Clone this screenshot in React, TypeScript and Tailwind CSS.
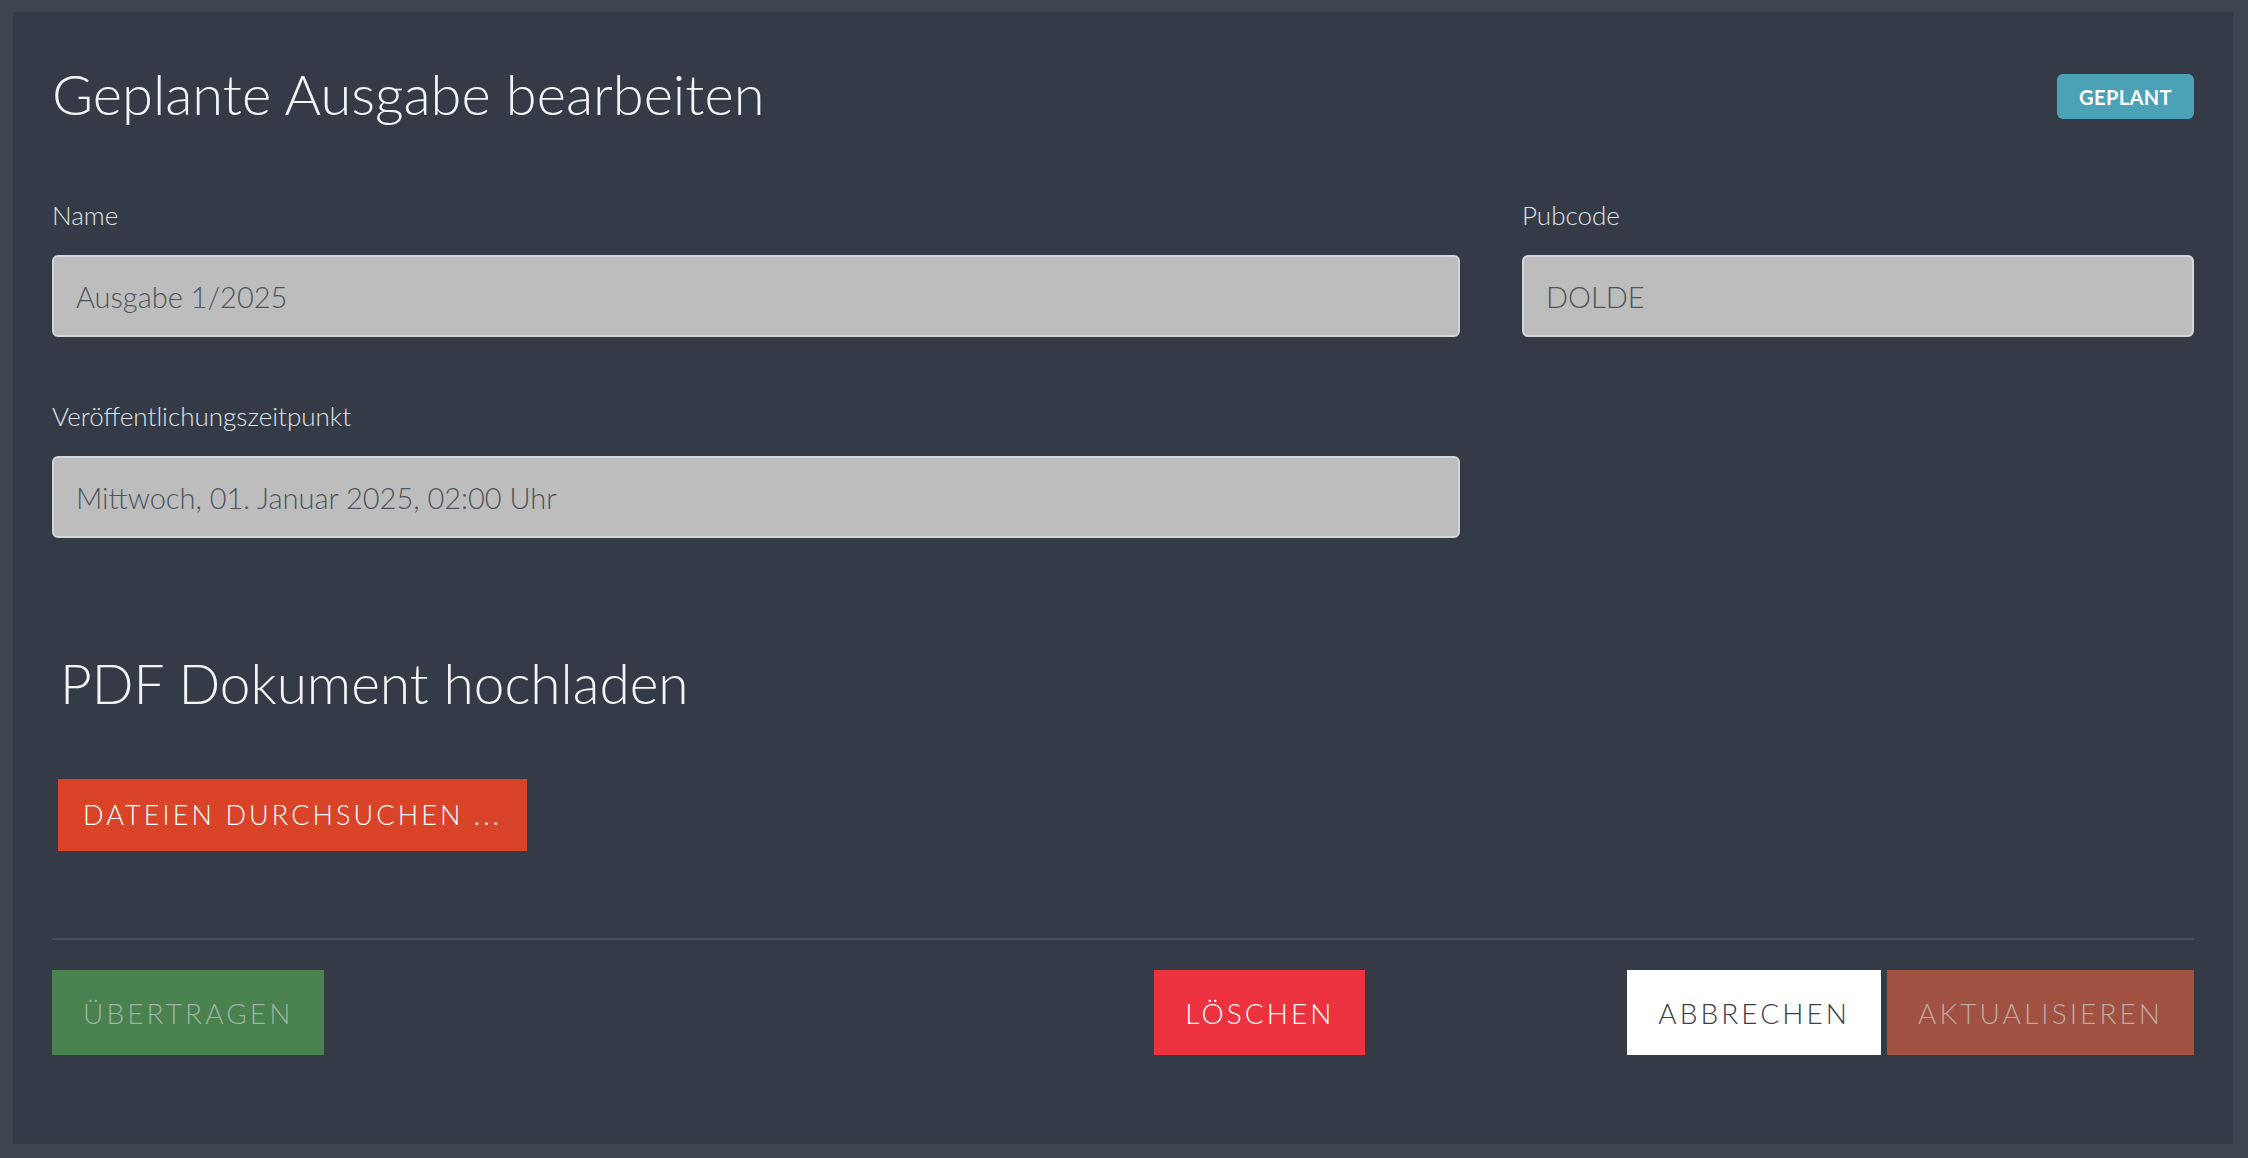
export default function App() {
    const labelClass = "block text-[26px] font-light text-[#dfe2e6] leading-[36px] mb-[22px]";
    const inputClass = "w-full h-[82px] bg-[#bdbdbd] border-2 border-[#d3d6db] rounded-[6px] px-[22px] text-[29px] font-light text-[#4f545c] outline-none";
    const buttonClass = "h-[85px] px-[31px] text-[28px] font-light tracking-[0.11em] uppercase";

    return (
        <div className="min-h-screen bg-[#3e454f] pt-[12px] pl-[13px] pr-[15px] pb-[13px] font-['Lato',sans-serif]">
            <div className="bg-[#353b46] h-[1132px] px-[39px] pt-[50px]">
                <div className="flex justify-between items-start">
                    <h1 className="text-[56px] font-light text-[#f3f4f6] leading-[64px]">Geplante Ausgabe bearbeiten</h1>
                    <span className="mt-[12px] h-[45px] px-[22px] flex items-center bg-[#4ba1b6] rounded-[6px] text-[20px] font-bold text-white tracking-[0.02em]">GEPLANT</span>
                </div>

                <div className="grid grid-cols-[1fr_672px] gap-x-[62px] mt-[71px]">
                    <div>
                        <label className={labelClass}>Name</label>
                        <input className={inputClass} defaultValue="Ausgabe 1/2025" readOnly />
                    </div>
                    <div>
                        <label className={labelClass}>Pubcode</label>
                        <input className={inputClass} defaultValue="DOLDE" readOnly />
                    </div>
                    <div className="mt-[61px]">
                        <label className={labelClass}>Veröffentlichungszeitpunkt</label>
                        <input className={inputClass} defaultValue="Mittwoch, 01. Januar 2025, 02:00 Uhr" readOnly />
                    </div>
                </div>

                <div className="pl-[8px] mt-[113px]">
                    <h2 className="text-[55px] font-light text-[#f3f4f6] leading-[64px]">PDF Dokument hochladen</h2>
                </div>
                <div className="pl-[6px] mt-[64px]">
                    <button className="h-[72px] px-[25px] bg-[#d94429] text-white text-[27px] font-light tracking-[0.115em]">DATEIEN DURCHSUCHEN ...</button>
                </div>

                <div className="h-[2px] bg-[#464d57] mt-[87px]" />

                <div className="flex mt-[30px]">
                    <button className={`${buttonClass} bg-[#49814f] text-[#9fb3a3]`}>Übertragen</button>
                    <button className={`${buttonClass} ml-[830px] bg-[#ec323e] text-white`}>Löschen</button>
                    <div className="ml-auto flex gap-[6px]">
                        <button className={`${buttonClass} bg-white text-[#3a404a]`}>Abbrechen</button>
                        <button className={`${buttonClass} bg-[#a05141] text-[#bfa9a5]`}>Aktualisieren</button>
                    </div>
                </div>
            </div>
        </div>
    );
}
